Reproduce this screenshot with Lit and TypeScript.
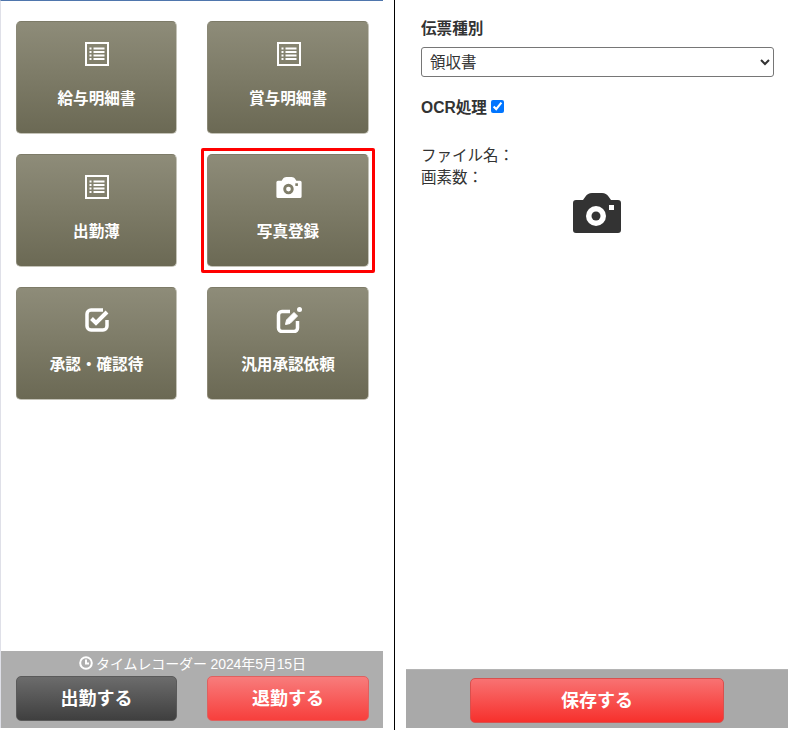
import { LitElement, html, css, svg } from "lit";
import { customElement } from "lit/decorators.js";

const listIcon = html`<svg class="ic" width="24" height="24" viewBox="0 0 24 24" fill="none" stroke="#fff">
  <rect x="1" y="1" width="22" height="22" stroke-width="2"></rect>
  ${[6.5, 10, 13.5, 17].map(
    (y) => svg`<path d="M4.500 ${y}h2M8.500 ${y}h11" stroke-width="2"></path>`
  )}
</svg>`;

const camera = (w: number, h: number, bg: string, fg: string) => html`<svg class="ic" width=${w} height=${h} viewBox="0 0 48 40">
  <path d="M3 7h7l2.500-3.500C14 1.500 16 0 19 0h10c3 0 5 1.500 6.500 3.500L38 7h7a3 3 0 0 1 3 3v27a3 3 0 0 1-3 3H3a3 3 0 0 1-3-3V10a3 3 0 0 1 3-3z" fill=${bg}></path>
  <circle cx="23" cy="23" r="10" fill=${fg}></circle>
  <circle cx="23" cy="23" r="4.500" fill=${bg}></circle>
  <rect x="36" y="12" width="5" height="5" fill=${fg}></rect>
</svg>`;

const checkIcon = html`<svg class="ic" width="24" height="24" viewBox="0 0 24 24" fill="none" stroke="#fff" stroke-width="3.500">
  <path d="M18 2H6A4 4 0 0 0 2 6v12a4 4 0 0 0 4 4h12a4 4 0 0 0 4-4v-6"></path>
  <path d="M6.500 10.500l4.500 4.500L22 4" stroke-width="4"></path>
</svg>`;

const editIcon = html`<svg class="ic" width="26" height="26" viewBox="0 0 26 26" fill="none" stroke="#fff" stroke-width="3.500">
  <path d="M14 4.500H6A3.500 3.500 0 0 0 2.500 8v13A3.500 3.500 0 0 0 6 24.500h12a3.500 3.500 0 0 0 3.500-3.500v-7"></path>
  <path d="M9.500 17.500l1-4.500 7.500-7.500 3.500 3.500-7.500 7.500z" fill="#fff" stroke-width="1"></path>
  <circle cx="23.500" cy="2.500" r="2.500" fill="#fff" stroke="none"></circle>
</svg>`;

const clockIcon = html`<svg class="clock" width="14" height="14" viewBox="0 0 14 14" fill="none" stroke="#fff" stroke-width="2">
  <circle cx="7" cy="7" r="5.800"></circle>
  <path d="M7 3.500V7.500H10"></path>
</svg>`;

const tiles = [
  { label: "給与明細書", icon: listIcon },
  { label: "賞与明細書", icon: listIcon },
  { label: "出勤薄", icon: listIcon },
  { label: "写真登録", icon: camera(26, 21, "#fff", "#807e6a"), selected: true },
  { label: "承認・確認待", icon: checkIcon },
  { label: "汎用承認依頼", icon: editIcon },
];

@customElement("app-root")
export class AppRoot extends LitElement {
  static styles = css`
    :host {
      display: flex;
      width: 788px;
      height: 730px;
      background: #fff;
      color: #333;
      font-family: "Liberation Sans", "Noto Sans CJK JP", sans-serif;
      font-size: 16px;
      overflow: hidden;
    }
    .left {
      width: 395px;
      flex: none;
      box-sizing: border-box;
      border-right: 1px solid #000;
      padding-bottom: 2px;
    }
    .phone {
      width: 383px;
      height: 100%;
      box-sizing: border-box;
      display: flex;
      flex-direction: column;
      border-left: 1px solid #dfe0e8;
      border-top: 1px solid #4f76ad;
    }
    .grid {
      flex: 1;
      display: grid;
      grid-template-columns: 161px 162px;
      grid-auto-rows: 113px;
      column-gap: 30px;
      row-gap: 20px;
      padding: 20px 15px;
      align-content: start;
    }
    .tile {
      position: relative;
      box-sizing: border-box;
      display: flex;
      flex-direction: column;
      align-items: center;
      border-style: solid;
      border-width: 1px;
      border-color: #7d7b68 #c4c3b8 #c4c3b8 #8a8876;
      border-radius: 5px;
      background: linear-gradient(#8e8c79, #6b6954);
      color: #fff;
      font-weight: 700;
      font-size: 15.600px;
    }
    .tile.selected::after {
      content: "";
      position: absolute;
      inset: -7px;
      border: 3px solid #f00;
      border-radius: 2px;
    }
    .icon-slot {
      height: 24px;
      margin-top: 20px;
      margin-left: 1px;
      display: flex;
      align-items: center;
      justify-content: center;
    }
    .ic {
      display: block;
      flex: none;
    }
    .tile-label {
      margin-top: 22px;
      line-height: 22px;
    }
    .recorder {
      background: #aeaeae;
      padding: 0 15px 7px;
    }
    .stamp {
      display: flex;
      align-items: center;
      justify-content: center;
      gap: 3px;
      height: 24px;
      color: #fff;
      font-size: 14px;
      letter-spacing: -0.12px;
    }
    .clock {
      margin-left: 1px;
    }
    .rec-buttons {
      display: grid;
      grid-template-columns: 161px 162px;
      column-gap: 30px;
      margin-top: 1px;
    }
    .btn {
      box-sizing: border-box;
      display: flex;
      align-items: center;
      justify-content: center;
      height: 45px;
      padding-bottom: 3px;
      border-radius: 5px;
      color: #fff;
      font-weight: 700;
      font-size: 18px;
    }
    .dark {
      border: 1px solid #5a5a5a;
      background: linear-gradient(#6c6c6c, #3f3f3f);
    }
    .red {
      border: 1px solid #e0605f;
      background: linear-gradient(#f87c7c, #f73f3c);
    }
    .right {
      flex: 1;
      min-width: 0;
      display: flex;
      flex-direction: column;
      padding-left: 11px;
      padding-bottom: 2px;
    }
    .form {
      flex: 1;
      padding: 19px 14px 0 15px;
    }
    .field-label {
      font-weight: 700;
      font-size: 15.600px;
      line-height: 20px;
      color: #333;
    }
    select {
      display: block;
      width: 100%;
      height: 30px;
      margin-top: 8px;
      padding-left: 4px;
      box-sizing: border-box;
      background: #fff;
      border: 1px solid #767676;
      border-radius: 3px;
      font-family: inherit;
      font-size: 15.500px;
      color: #333;
    }
    .ocr {
      display: flex;
      align-items: center;
      gap: 4px;
      margin-top: 19px;
      height: 20px;
      font-weight: 700;
      font-size: 15.600px;
    }
    .ocr input {
      width: 13px;
      height: 13px;
      margin: 0;
      accent-color: #0075ff;
    }
    .meta {
      margin-top: 29px;
      line-height: 22px;
      font-size: 15.500px;
      color: #333;
    }
    .shot {
      display: flex;
      justify-content: center;
      margin-top: 4px;
      padding-right: 1px;
    }
    .save-bar {
      height: 59px;
      box-sizing: border-box;
      background: #a9a9a9;
      border-top: 1px solid #b4b4b4;
      display: flex;
      justify-content: center;
      padding-top: 8px;
    }
    .save-bar .btn {
      width: 254px;
      border: 1px solid #d8504e;
      background: linear-gradient(#f87272, #f7302c);
    }
  `;

  render() {
    return html`
      <section class="left">
        <div class="phone">
          <div class="grid">
            ${tiles.map(
              (t) => html`<div class="tile ${t.selected ? "selected" : ""}">
                <div class="icon-slot">${t.icon}</div>
                <div class="tile-label">${t.label}</div>
              </div>`
            )}
          </div>
          <div class="recorder">
            <div class="stamp">${clockIcon}<span>タイムレコーダー 2024年5月15日</span></div>
            <div class="rec-buttons">
              <div class="btn dark">出勤する</div>
              <div class="btn red">退勤する</div>
            </div>
          </div>
        </div>
      </section>
      <section class="right">
        <div class="form">
          <div class="field-label">伝票種別</div>
          <select><option>領収書</option></select>
          <label class="ocr">OCR処理<input type="checkbox" checked /></label>
          <div class="meta">ファイル名：<br />画素数：</div>
          <div class="shot">${camera(48, 40, "#333", "#fff")}</div>
        </div>
        <div class="save-bar"><div class="btn">保存する</div></div>
      </section>
    `;
  }
}
